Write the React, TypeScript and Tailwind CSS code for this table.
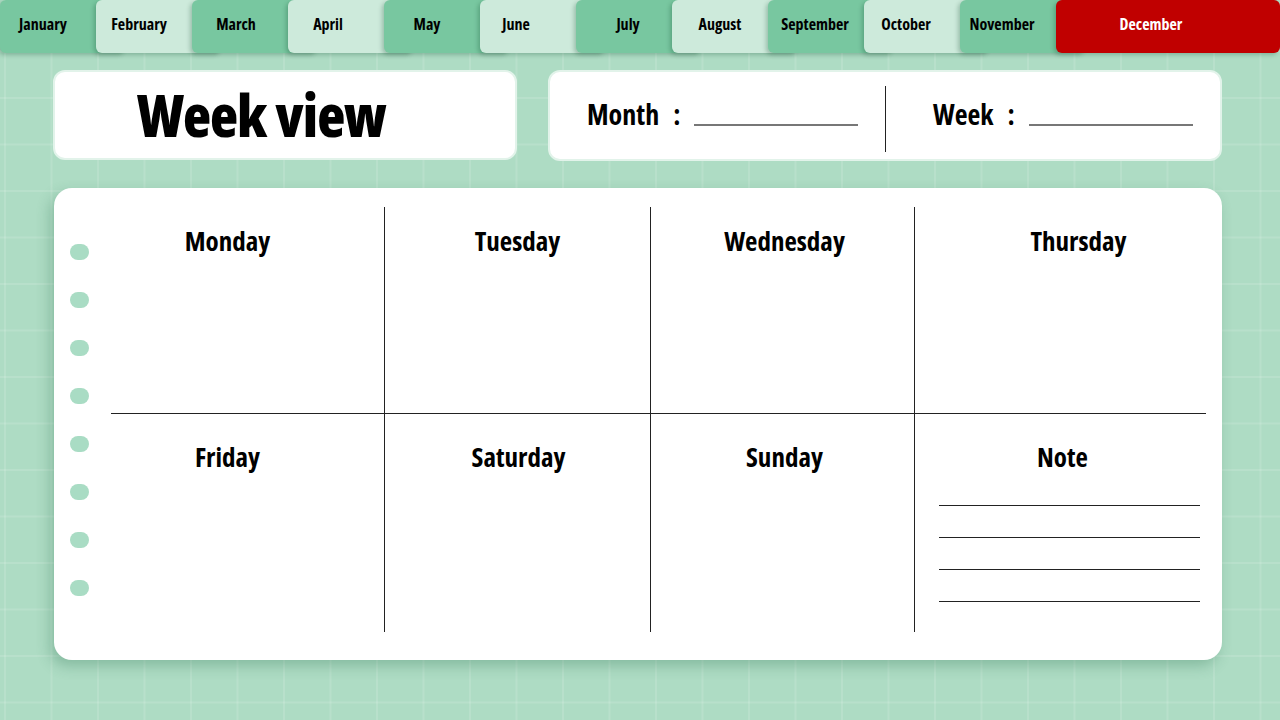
import React from 'react';

const font = "font-['Open_Sans','Roboto_Condensed',sans-serif] font-stretch-condensed";

const months = [
  { name: 'January', center: 43, light: false },
  { name: 'February', center: 43, light: true },
  { name: 'March', center: 44, light: false },
  { name: 'April', center: 40, light: true },
  { name: 'May', center: 43, light: false },
  { name: 'June', center: 36, light: true },
  { name: 'July', center: 52, light: false },
  { name: 'August', center: 48, light: true },
  { name: 'September', center: 47, light: false },
  { name: 'October', center: 42, light: true },
  { name: 'November', center: 42, light: false },
];

const Tab = ({ name, center, light }: { name: string; center: number; light: boolean }) => (
  <div
    className={`relative h-[53px] w-[126px] -mr-[30px] shrink-0 rounded-[6px] flex items-center pb-[5px] shadow-[-2px_2px_4px_rgba(0,60,30,0.25)] ${
      light ? 'bg-[#cdeadb]' : 'bg-[#78c7a0]'
    }`}
  >
    <span style={{ width: center * 2 }} className="text-center text-[16px] font-bold text-black">
      {name}
    </span>
  </div>
);

const Dot = () => <div className="h-[16px] w-[19px] rounded-full bg-[#a9dcc4]" />;

const DayCell = ({ label, shift = 0, second = false, border = true }: { label: string; shift?: number; second?: boolean; border?: boolean }) => (
  <div
    className={`flex justify-center ${second ? 'border-t border-[#222] pt-[24px]' : 'pt-[15px]'} ${
      border ? 'border-r border-r-[#222]' : ''
    }`}
  >
    <span style={{ marginLeft: shift }} className="text-[27px] font-bold leading-[38px] text-black">
      {label}
    </span>
  </div>
);

export default function App() {
  return (
    <div
      className={`${font} h-[720px] w-[1280px] overflow-hidden bg-[#aedcc4] bg-[linear-gradient(to_right,rgba(255,255,255,0.12)_2px,transparent_2px),linear-gradient(to_bottom,rgba(255,255,255,0.12)_2px,transparent_2px)] bg-size-[46.5px_46.5px] bg-position-[4px_4px]`}
    >
      {/* month tabs */}
      <div className="flex h-[53px]">
        {months.map((m) => (
          <Tab key={m.name} {...m} />
        ))}
        <div className="relative flex h-[53px] flex-1 items-center rounded-[6px] bg-[#c00000] pb-[5px] shadow-[-2px_2px_4px_rgba(0,60,30,0.25)]">
          <span className="w-[190px] text-center text-[16px] font-bold text-white">December</span>
        </div>
      </div>

      {/* header cards */}
      <div className="mt-[17px] flex gap-[31px] pl-[53px] pr-[58px]">
        <div className="flex h-[90px] w-[464px] items-center rounded-[12px] border-2 border-[#e2f3ea] bg-white pl-[82px]">
          <span className="text-[58px] font-extrabold leading-none tracking-[-1px] text-black">Week view</span>
        </div>
        <div className="flex h-[91px] flex-1 items-center rounded-[12px] border-2 border-[#e2f3ea] bg-white">
          <div className="mb-[4px] flex w-[335px] shrink-0 items-center pl-[37px]">
            <span className="text-[28px] font-bold text-black">Month</span>
            <span className="ml-[14px] text-[28px] font-bold text-black">:</span>
            <div className="ml-[14px] mt-[22px] h-[2px] w-[164px] bg-[#777]" />
          </div>
          <div className="mt-[7px] h-[66px] w-px bg-[#222]" />
          <div className="mb-[4px] flex flex-1 items-center pl-[47px]">
            <span className="text-[28px] font-bold text-black">Week</span>
            <span className="ml-[14px] text-[28px] font-bold text-black">:</span>
            <div className="ml-[14px] mt-[22px] h-[2px] w-[164px] bg-[#777]" />
          </div>
        </div>
      </div>

      {/* planner */}
      <div className="ml-[54px] mt-[27px] flex h-[472px] w-[1168px] rounded-[18px] bg-white pb-[28px] pr-[16px] pt-[19px] shadow-[-4px_6px_14px_rgba(40,110,75,0.3)]">
        <div className="flex w-[57px] flex-col items-center gap-[32px] pr-[6px] pt-[37px]">
          {Array.from({ length: 8 }).map((_, i) => (
            <Dot key={i} />
          ))}
        </div>
        <div className="grid flex-1 grid-cols-[274px_266px_264px_1fr] grid-rows-[206px_1fr]">
          <DayCell label="Monday" shift={-40} />
          <DayCell label="Tuesday" />
          <DayCell label="Wednesday" shift={4} />
          <DayCell label="Thursday" shift={36} border={false} />
          <DayCell label="Friday" shift={-40} second />
          <DayCell label="Saturday" shift={2} second />
          <DayCell label="Sunday" shift={4} second />
          <div className="flex flex-col items-center border-t border-[#222] pl-[24px] pr-[6px] pt-[24px]">
            <span className="ml-[-14px] text-[27px] font-bold leading-[38px] text-black">Note</span>
            <div className="mt-[29px] flex w-full flex-col gap-[31px]">
              <div className="h-px w-full bg-[#222]" />
              <div className="h-px w-full bg-[#222]" />
              <div className="h-px w-full bg-[#222]" />
              <div className="h-px w-full bg-[#222]" />
            </div>
          </div>
        </div>
      </div>
    </div>
  );
}
